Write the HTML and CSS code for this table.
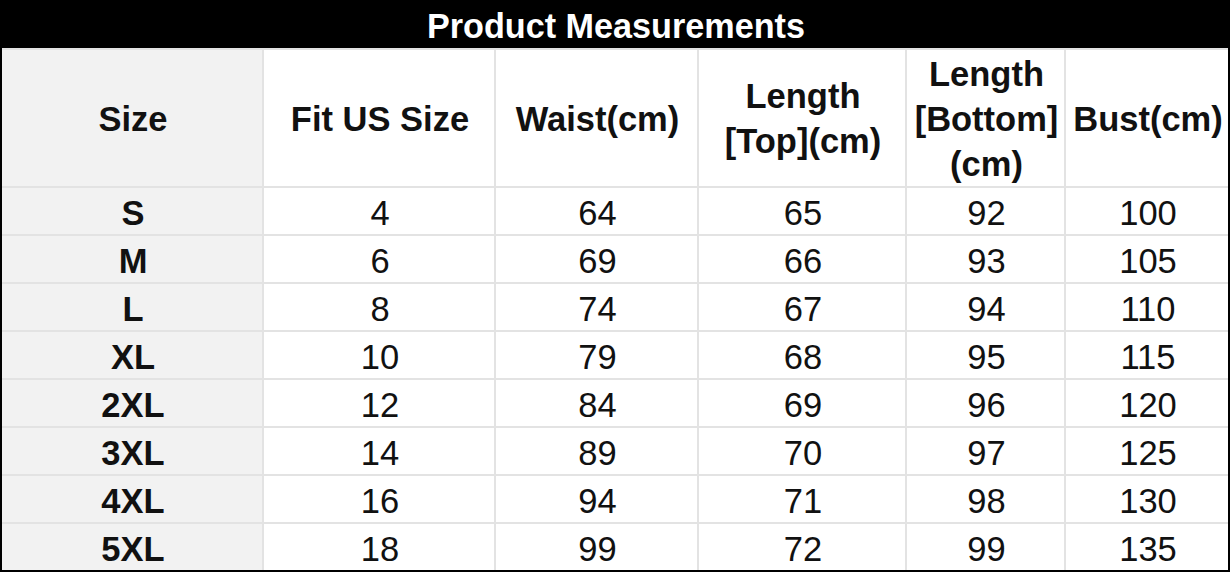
FILE: index.html
```html
<!DOCTYPE html>
<html>
<head>
<meta charset="utf-8">
<link rel="stylesheet" href="styles.css">
</head>
<body>
<div class="sheet">
  <div class="title">Product Measurements</div>
  <div class="grid">
    <div class="cell head first">Size</div>
    <div class="cell head">Fit US Size</div>
    <div class="cell head">Waist(cm)</div>
    <div class="cell head">Length<br>[Top](cm)</div>
    <div class="cell head">Length<br>[Bottom]<br>(cm)</div>
    <div class="cell head">Bust(cm)</div>

    <div class="cell first">S</div><div class="cell">4</div><div class="cell">64</div><div class="cell">65</div><div class="cell">92</div><div class="cell">100</div>
    <div class="cell first">M</div><div class="cell">6</div><div class="cell">69</div><div class="cell">66</div><div class="cell">93</div><div class="cell">105</div>
    <div class="cell first">L</div><div class="cell">8</div><div class="cell">74</div><div class="cell">67</div><div class="cell">94</div><div class="cell">110</div>
    <div class="cell first">XL</div><div class="cell">10</div><div class="cell">79</div><div class="cell">68</div><div class="cell">95</div><div class="cell">115</div>
    <div class="cell first">2XL</div><div class="cell">12</div><div class="cell">84</div><div class="cell">69</div><div class="cell">96</div><div class="cell">120</div>
    <div class="cell first">3XL</div><div class="cell">14</div><div class="cell">89</div><div class="cell">70</div><div class="cell">97</div><div class="cell">125</div>
    <div class="cell first">4XL</div><div class="cell">16</div><div class="cell">94</div><div class="cell">71</div><div class="cell">98</div><div class="cell">130</div>
    <div class="cell first">5XL</div><div class="cell">18</div><div class="cell">99</div><div class="cell">72</div><div class="cell">99</div><div class="cell">135</div>
  </div>
</div>
</body>
</html>
```

FILE: styles.css
```css
html, body {
  margin: 0;
  padding: 0;
  background: #ffffff;
}
body {
  font-family: "Liberation Sans", Arial, sans-serif;
  color: #111111;
}
.sheet {
  width: 1230px;
  height: 572px;
  display: flex;
  flex-direction: column;
}
.title {
  height: 48px;
  background: #000000;
  color: #ffffff;
  font-weight: bold;
  font-size: 34.2px;
  line-height: 52px;
  text-align: center;
  padding-left: 2px;
}
.grid {
  display: grid;
  grid-template-columns: 260px 230px 201px 206px 157px 162px;
  grid-template-rows: 136px repeat(8, 46px);
  gap: 2px;
  padding-top: 2px;
  background: #e3e3e3;
  border-left: 2px solid #000000;
  border-right: 2px solid #000000;
  border-bottom: 2px solid #000000;
}
.cell {
  background: #ffffff;
  display: flex;
  align-items: center;
  justify-content: center;
  text-align: center;
  font-size: 34.5px;
  line-height: 45px;
  padding-top: 4px;
  padding-left: 2px;
}
.head {
  font-weight: bold;
  font-size: 34.5px;
  padding-top: 2px;
}
.first {
  background: #f2f2f2;
  font-weight: bold;
}
```
